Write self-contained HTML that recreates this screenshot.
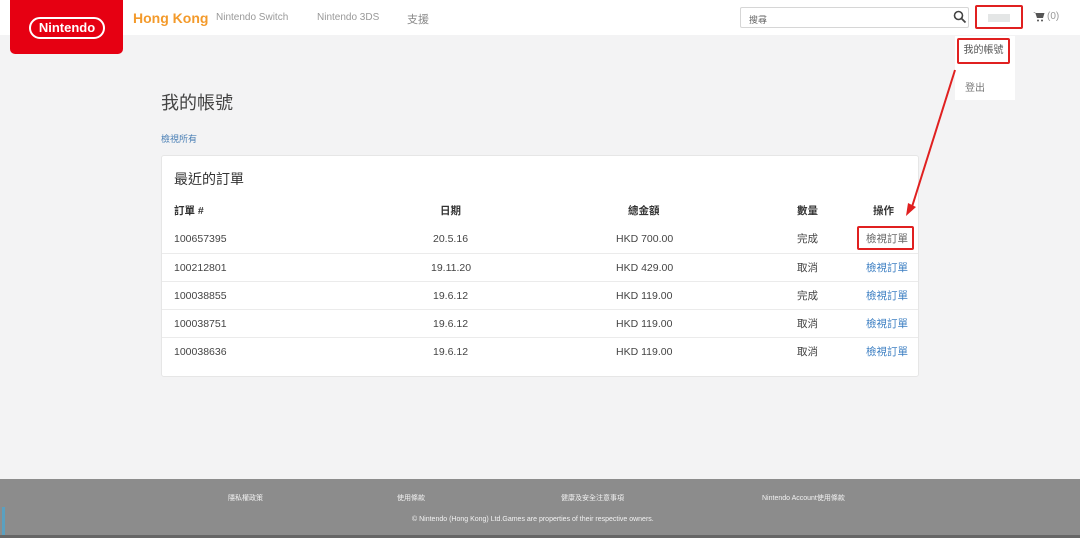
<!DOCTYPE html>
<html><head><meta charset="utf-8"><style>
*{margin:0;padding:0;box-sizing:border-box}
body{width:1080px;height:538px;overflow:hidden;background:#f3f3f4;font-family:"Liberation Sans","Noto Sans CJK TC",sans-serif;color:#333;position:relative}
.hdr{position:absolute;left:0;top:0;width:1080px;height:35px;background:#fff}
.logo{position:absolute;left:10px;top:0;width:113px;height:54px;background:#e60012;border-radius:0 0 5px 5px}
.logo div{position:absolute;left:19px;top:17px;width:76px;height:22px;border:2.5px solid #fff;border-radius:11px;color:#fff;font-weight:bold;font-size:13px;text-align:center;line-height:17px}
.abs{position:absolute;white-space:nowrap}
.card{position:absolute;left:161px;top:155px;width:758px;height:222px;background:#fff;border:1px solid #e6e6e6;border-radius:3px}
.row{position:absolute;left:0;width:756px;height:28px;font-size:10.5px;line-height:28px;color:#444}
.row span{position:absolute}
.sep{border-top:1px solid #ebebeb}
.blue{color:#3b7ec2}
.foot{position:absolute;left:0;top:479px;width:1080px;height:59px;background:#8c8c8c;color:#f2f2f2;font-size:7px}
</style></head><body>
<div class="hdr"></div>
<div class="logo"><div>Nintendo</div></div>
<div class="abs" style="left:133px;top:10px;font-size:14px;font-weight:bold;color:#f39a2b">Hong Kong</div>
<div class="abs" style="left:216px;top:12px;font-size:10px;color:#999">Nintendo Switch</div>
<div class="abs" style="left:317px;top:12px;font-size:10px;color:#999">Nintendo 3DS</div>
<div class="abs" style="left:407px;top:11px;font-size:11px;color:#888">支援</div>
<div class="abs" style="left:740px;top:7px;width:229px;height:21px;border:1px solid #d6d6d6;border-radius:2px;background:#fff;font-size:9px;color:#666;padding:5px 0 0 8px">搜尋</div>
<svg class="abs" style="left:953px;top:10px" width="14" height="14" viewBox="0 0 14 14"><circle cx="5.5" cy="5.5" r="4" fill="none" stroke="#444" stroke-width="1.6"/><path d="M8.5 8.5L12.5 12.5" stroke="#444" stroke-width="1.8"/></svg>
<div class="abs" style="left:975px;top:5px;width:48px;height:24px;border:2px solid #e02020;border-radius:2px"><div style="position:absolute;left:11px;top:7px;width:22px;height:8px;background:#e4e6e6"></div></div>
<svg class="abs" style="left:1033px;top:11px" width="12" height="11" viewBox="0 0 12 11"><path d="M0 1h2l2 6h6l1.5-5H3" fill="#555"/><circle cx="5" cy="9.5" r="1" fill="#555"/><circle cx="9" cy="9.5" r="1" fill="#555"/></svg>
<div class="abs" style="left:1047px;top:11px;font-size:10px;color:#999">(0)</div>
<div class="abs" style="left:955px;top:36px;width:60px;height:64px;background:#fff"></div>
<div class="abs" style="left:957px;top:38px;width:53px;height:26px;border:2px solid #e02020;border-radius:2px;font-size:10px;color:#555;line-height:22px;text-align:center">我的帳號</div>
<div class="abs" style="left:965px;top:79px;font-size:10px;color:#777">登出</div>
<div class="abs" style="left:161px;top:89px;font-size:18px;color:#444">我的帳號</div>
<div class="abs" style="left:161px;top:132px;font-size:9px;color:#4a7fb5">檢視所有</div>
<div class="card">
<div class="abs" style="left:12px;top:13px;font-size:14px;color:#333">最近的訂單</div>
<div class="row" style="top:41px;font-weight:bold;color:#333"><span style="left:12px">訂單 #</span><span style="left:278px">日期</span><span style="left:466px">總金額</span><span style="left:635px">數量</span><span style="left:711px">操作</span></div>
<div class="row" style="top:69px"><span style="left:12px">100657395</span><span style="left:271px">20.5.16</span><span style="left:454px">HKD 700.00</span><span style="left:635px">完成</span><span style="left:704px;color:#666">檢視訂單</span></div>
<div class="row sep" style="top:97px"><span style="left:12px">100212801</span><span style="left:269px">19.11.20</span><span style="left:454px">HKD 429.00</span><span style="left:635px">取消</span><span class="blue" style="left:704px">檢視訂單</span></div>
<div class="row sep" style="top:125px"><span style="left:12px">100038855</span><span style="left:271px">19.6.12</span><span style="left:454px">HKD 119.00</span><span style="left:635px">完成</span><span class="blue" style="left:704px">檢視訂單</span></div>
<div class="row sep" style="top:153px"><span style="left:12px">100038751</span><span style="left:271px">19.6.12</span><span style="left:454px">HKD 119.00</span><span style="left:635px">取消</span><span class="blue" style="left:704px">檢視訂單</span></div>
<div class="row sep" style="top:181px"><span style="left:12px">100038636</span><span style="left:271px">19.6.12</span><span style="left:454px">HKD 119.00</span><span style="left:635px">取消</span><span class="blue" style="left:704px">檢視訂單</span></div>
</div>
<div class="abs" style="left:857px;top:226px;width:57px;height:24px;border:2px solid #e02020;border-radius:2px"></div>
<svg class="abs" style="left:900px;top:60px" width="70" height="165" viewBox="0 0 70 165"><path d="M55 10L11 150" stroke="#e02020" stroke-width="2"/><path d="M6 156L8 143L16 147Z" fill="#e02020"/></svg>
<div class="foot">
<div class="abs" style="left:228px;top:14px">隱私權政策</div>
<div class="abs" style="left:397px;top:14px">使用條款</div>
<div class="abs" style="left:561px;top:14px">健康及安全注意事項</div>
<div class="abs" style="left:762px;top:14px">Nintendo Account使用條款</div>
<div class="abs" style="left:412px;top:37px">© Nintendo (Hong Kong) Ltd.Games are properties of their respective owners.</div>
<div class="abs" style="left:2px;top:28px;width:3px;height:28px;background:#5aa0c0"></div>
<div class="abs" style="left:0;top:56px;width:1080px;height:3px;background:#666"></div>
</div>
</body></html>
